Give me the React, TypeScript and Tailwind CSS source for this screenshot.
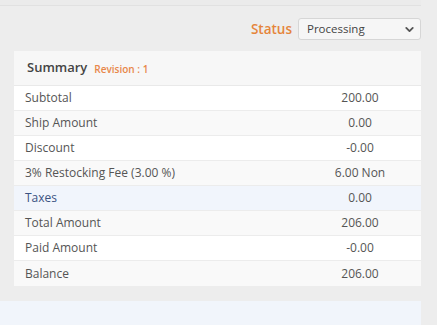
import { ChevronDown } from "lucide-react";

const rows = [
  { label: "Subtotal", value: "200.00", bg: "bg-white" },
  { label: "Ship Amount", value: "0.00", bg: "bg-[#f9f9f9]" },
  { label: "Discount", value: "-0.00", bg: "bg-white" },
  { label: "3% Restocking Fee (3.00 %)", value: "6.00 Non", bg: "bg-[#f9f9f9]" },
  { label: "Taxes", value: "0.00", bg: "bg-[#f1f5fc]", hover: true },
  { label: "Total Amount", value: "206.00", bg: "bg-[#f9f9f9]" },
  { label: "Paid Amount", value: "-0.00", bg: "bg-white" },
  { label: "Balance", value: "206.00", bg: "bg-[#f9f9f9]" },
];

export default function App() {
  return (
    <div className="w-[437px] h-[325px] overflow-hidden bg-[#ededed] font-['Open_Sans',sans-serif]">
      <div className="w-[421px]">
        <div className="h-[6px] border-b border-[#e1e1e1] bg-[#ebebeb]" />

        <div className="flex items-center justify-end gap-[6px] mt-[12px] h-[22px]">
          <span className="text-[13.5px] font-semibold text-[#e5853b]">Status</span>
          <div className="w-[123px] h-[22px] flex items-center justify-between pl-[8px] pr-[4px] rounded-[3px] border border-[#d6d6d6] bg-[#f6f6f6]">
            <span className="text-[11.5px] text-[#444]">Processing</span>
            <ChevronDown size={13} strokeWidth={3.4} className="text-[#555]" />
          </div>
        </div>

        <div className="ml-[14px] mt-[11px] bg-white">
          <div className="h-[35px] flex items-center gap-[7px] pl-[13px] bg-[#f7f7f7] border-b border-[#e9e9e9]">
            <span className="text-[13px] font-semibold text-[#444]">Summary</span>
            <span className="text-[10px] font-semibold text-[#e8874a] mt-[2px]">Revision : 1</span>
          </div>
          {rows.map((r) => (
            <div
              key={r.label}
              className={`grid grid-cols-[1fr_122px] h-[25px] items-center border-b border-[#ececec] last:border-b-0 ${r.bg}`}
            >
              <span className={`pl-[11px] text-[12px] ${r.hover ? "text-[#3b5282]" : "text-[#555]"}`}>
                {r.label}
              </span>
              <span className="text-center text-[12px] text-[#555]">{r.value}</span>
            </div>
          ))}
        </div>

        <div className="mt-[15px] h-[30px] bg-[#f1f5fb]" />
      </div>
    </div>
  );
}
